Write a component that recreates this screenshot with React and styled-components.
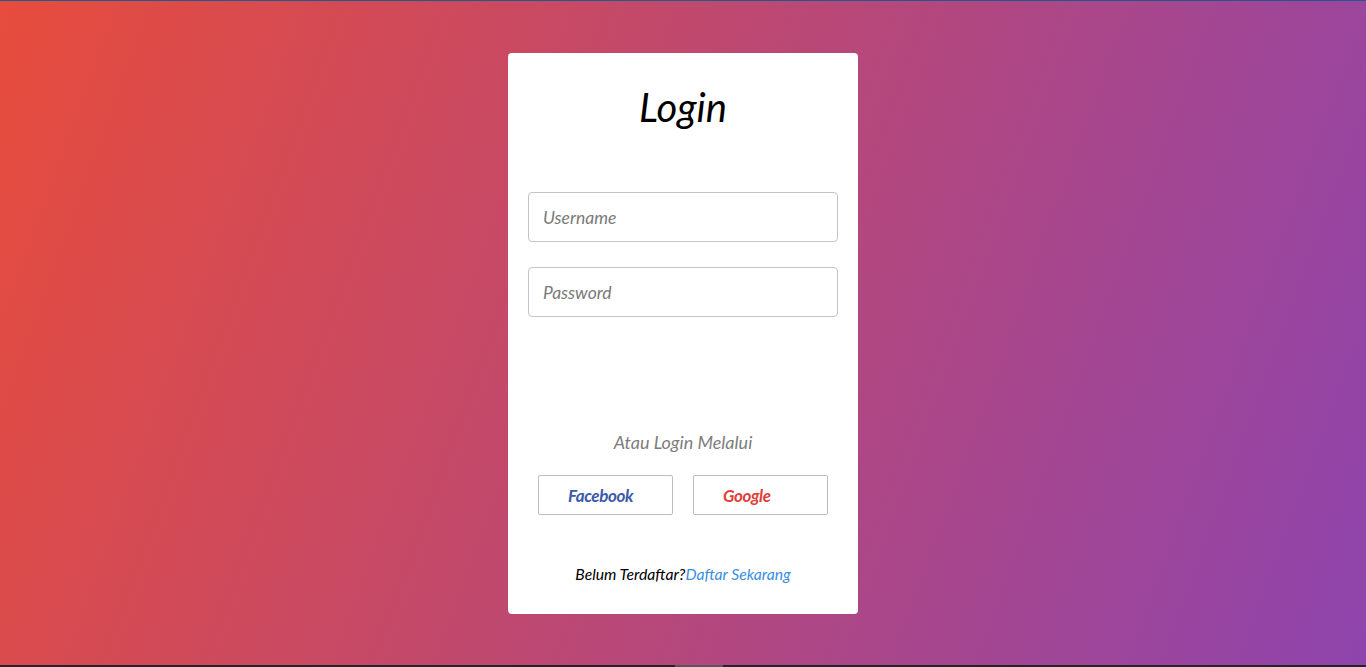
import React from "react";
import styled, { createGlobalStyle } from "styled-components";

const GlobalStyle = createGlobalStyle`
    html, body {
        margin: 0;
        padding: 0;
    }
    body {
        font-family: "Lato", "Open Sans", sans-serif;
        font-style: italic;
    }
`;

const Page = styled.div`
    width: 100vw;
    height: 667px;
    display: flex;
    flex-direction: column;
    overflow: hidden;
    border-top: 1px solid #1f5a8e;
    box-sizing: border-box;
`;

const Backdrop = styled.div`
    flex: 1;
    background: linear-gradient(110deg, #e74c3c 0%, #8e44ad 100%);
    display: flex;
    justify-content: center;
    padding-top: 52px;
`;

const BottomBar = styled.div`
    height: 2px;
    background-color: #26222a;
    display: flex;
`;

const BarThumb = styled.div`
    width: 48px;
    margin-left: 675px;
    background-color: #5a565c;
`;

const Card = styled.div`
    width: 350px;
    height: 561px;
    background-color: #fff;
    border-radius: 4px;
    padding: 0 20px;
    box-sizing: border-box;
    display: flex;
    flex-direction: column;
`;

const Title = styled.h1`
    margin: 26px 0 0;
    font-size: 40px;
    font-weight: 400;
    line-height: 56px;
    text-align: center;
    color: #000;
`;

const Form = styled.div`
    margin-top: 57px;
    display: flex;
    flex-direction: column;
    gap: 25px;
`;

const Input = styled.input`
    height: 50px;
    width: 100%;
    box-sizing: border-box;
    border: 1px solid #c4c4c4;
    border-radius: 4px;
    padding: 0 14px;
    font-family: "Lato", sans-serif;
    font-style: italic;
    font-size: 17.5px;
    outline: none;
    &::placeholder {
        color: #7a7a7a;
    }
`;

const Divider = styled.p`
    margin: 114px 0 0;
    font-size: 18px;
    line-height: 22px;
    text-align: center;
    color: #7d7d7d;
`;

const SocialRow = styled.div`
    margin-top: 22px;
    display: flex;
    justify-content: center;
    gap: 20px;
`;

const SocialButton = styled.button`
    width: 135px;
    height: 40px;
    background-color: #fff;
    border: 1px solid #bdbdbd;
    border-radius: 2px;
    padding: 0 0 0 29px;
    text-align: left;
    font-family: "Lato", sans-serif;
    font-style: italic;
    font-weight: 700;
    font-size: 17px;
    letter-spacing: -0.4px;
    color: ${(p) => p.color};
    cursor: pointer;
`;

const Footer = styled.p`
    margin: 49px 0 0;
    font-size: 15.7px;
    line-height: 20px;
    text-align: center;
    color: #000;
`;

const Link = styled.a`
    color: #3a8ee0;
    text-decoration: none;
    cursor: pointer;
`;

export default function App() {
    return (
        <>
            <GlobalStyle />
            <Page>
                <Backdrop>
                    <Card>
                        <Title>Login</Title>
                        <Form>
                            <Input type="text" placeholder="Username" />
                            <Input type="password" placeholder="Password" />
                        </Form>
                        <Divider>Atau Login Melalui</Divider>
                        <SocialRow>
                            <SocialButton color="#3b5aa8">Facebook</SocialButton>
                            <SocialButton color="#e0403a">Google</SocialButton>
                        </SocialRow>
                        <Footer>
                            Belum Terdaftar?<Link>Daftar Sekarang</Link>
                        </Footer>
                    </Card>
                </Backdrop>
                <BottomBar>
                    <BarThumb />
                </BottomBar>
            </Page>
        </>
    );
}
